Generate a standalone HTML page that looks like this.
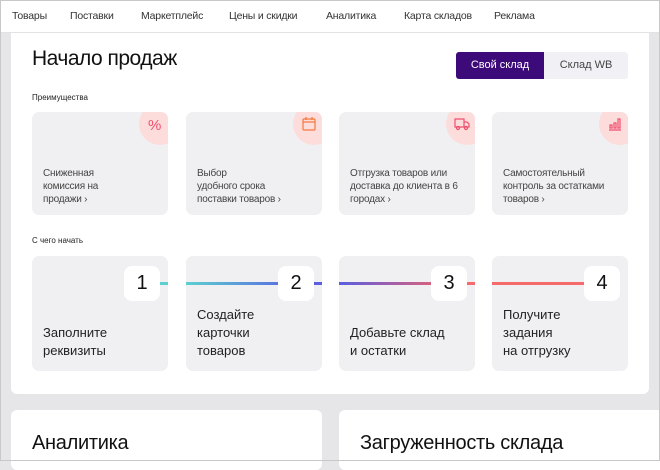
<!DOCTYPE html><html><head><meta charset="utf-8"><style>
*{margin:0;padding:0;box-sizing:border-box}
body{width:660px;height:461px;overflow:hidden;background:#e6e6e8;font-family:"Liberation Sans","Noto Sans CJK SC",sans-serif;position:relative;color:#1a1a1a}
.frame{position:absolute;inset:0;border:1px solid #c8c8c8;pointer-events:none;z-index:9}
.nav{position:absolute;left:0;top:0;width:660px;height:33px;background:#fff;border-bottom:1px solid #e2e2e2}
.nav span{position:absolute;top:10px;font-size:10.5px;color:#333;letter-spacing:-0.2px}
.main{position:absolute;left:11px;top:33px;width:638px;height:361px;background:#fff;border-radius:0 0 6px 6px}
h1{position:absolute;left:32px;top:47px;font-size:21px;font-weight:normal;color:#111;letter-spacing:-0.5px}
.t1{position:absolute;left:456px;top:52px;width:88px;height:27px;background:#3d0a7a;color:#fff;font-size:11px;text-align:center;line-height:27px;border-radius:3px 0 0 3px}
.t2{position:absolute;left:544px;top:52px;width:84px;height:27px;background:#f1f0f5;color:#444;font-size:11px;text-align:center;line-height:27px;border-radius:0 3px 3px 0}
.lbl{position:absolute;font-size:8px;color:#222}
.card{position:absolute;width:136px;background:#f0f0f2;border-radius:7px;overflow:hidden}
.adv{top:112px;height:103px}
.circ{position:absolute;right:-13px;top:-9px;width:42px;height:42px;border-radius:50%;background:#fddcdc}
.circ svg{position:absolute;left:8px;top:13px}
.atxt{position:absolute;left:11px;top:55px;font-size:10px;line-height:13px;color:#444;letter-spacing:-0.2px}
.step{top:256px;height:115px;overflow:visible}
.num{position:absolute;left:92px;top:10px;width:36px;height:35px;background:#fff;border-radius:8px;font-size:20px;text-align:center;line-height:35px;color:#111;z-index:2}
.stxt{position:absolute;left:11px;bottom:11px;font-size:13px;line-height:18px;color:#222}
.line{position:absolute;height:3px;top:282px;z-index:1}
.bc{position:absolute;top:410px;height:60px;background:#fff;border-radius:6px}
.bc div{position:absolute;left:21px;top:22px;font-size:20px;color:#111;letter-spacing:-0.3px}
</style></head><body>
<div class="nav">
<span style="left:12px">Товары</span><span style="left:70px">Поставки</span><span style="left:141px">Маркетплейс</span><span style="left:229px">Цены и скидки</span><span style="left:326px">Аналитика</span><span style="left:404px">Карта складов</span><span style="left:494px">Реклама</span>
</div>
<div class="main"></div>
<h1>Начало продаж</h1>
<div class="t1">Свой склад</div><div class="t2">Склад WB</div>
<div class="lbl" style="left:32px;top:93px">Преимущества</div>

<div class="card adv" style="left:32px"><div class="circ"><svg width="16" height="16" viewBox="0 0 16 16"><text x="1" y="14" font-size="15" fill="#f0506e" font-family="Liberation Sans">%</text></svg></div><div class="atxt">Сниженная<br>комиссия на<br>продажи ›</div></div>
<div class="card adv" style="left:186px"><div class="circ"><svg width="16" height="16" viewBox="0 0 16 16" fill="none" stroke="#f5783c" stroke-width="1.2"><rect x="2" y="3" width="12" height="11" rx="1"/><path d="M2 6h12M5 1v3M11 1v3"/></svg></div><div class="atxt">Выбор<br>удобного срока<br>поставки товаров ›</div></div>
<div class="card adv" style="left:339px"><div class="circ"><svg width="16" height="16" viewBox="0 0 16 16" fill="none" stroke="#f0506e" stroke-width="1.2"><path d="M1 3h9v8H1zM10 6h3l2 2v3h-5"/><circle cx="4" cy="12" r="1.5"/><circle cx="12" cy="12" r="1.5"/></svg></div><div class="atxt">Отгрузка товаров или<br>доставка до клиента в 6<br>городах ›</div></div>
<div class="card adv" style="left:492px"><div class="circ"><svg width="16" height="16" viewBox="0 0 16 16" fill="none" stroke="#f0506e" stroke-width="1.2"><path d="M2 14h12M3 9v3h2V9zM7 7v5h2V7zM11 3v9h2V3z"/></svg></div><div class="atxt">Самостоятельный<br>контроль за остатками<br>товаров ›</div></div>

<div class="lbl" style="left:32px;top:236px">С чего начать</div>
<div class="line" style="left:155px;width:13px;background:#5ccfcf"></div>
<div class="line" style="left:186px;width:100px;background:linear-gradient(90deg,#5ccfcf,#5a6ee0)"></div>
<div class="line" style="left:310px;width:12px;background:#5a5ee0"></div>
<div class="line" style="left:339px;width:100px;background:linear-gradient(90deg,#5a5ee0,#e06078)"></div>
<div class="line" style="left:462px;width:13px;background:#f56a6a"></div>
<div class="line" style="left:492px;width:100px;background:#f56a6a"></div>

<div class="card step" style="left:32px"><div class="num">1</div><div class="stxt">Заполните<br>реквизиты</div></div>
<div class="card step" style="left:186px"><div class="num">2</div><div class="stxt">Создайте<br>карточки<br>товаров</div></div>
<div class="card step" style="left:339px"><div class="num">3</div><div class="stxt">Добавьте склад<br>и остатки</div></div>
<div class="card step" style="left:492px"><div class="num">4</div><div class="stxt">Получите<br>задания<br>на отгрузку</div></div>

<div class="bc" style="left:11px;width:311px"><div>Аналитика</div></div>
<div class="bc" style="left:339px;width:330px"><div>Загруженность склада</div></div>
<div class="frame"></div>
</body></html>
